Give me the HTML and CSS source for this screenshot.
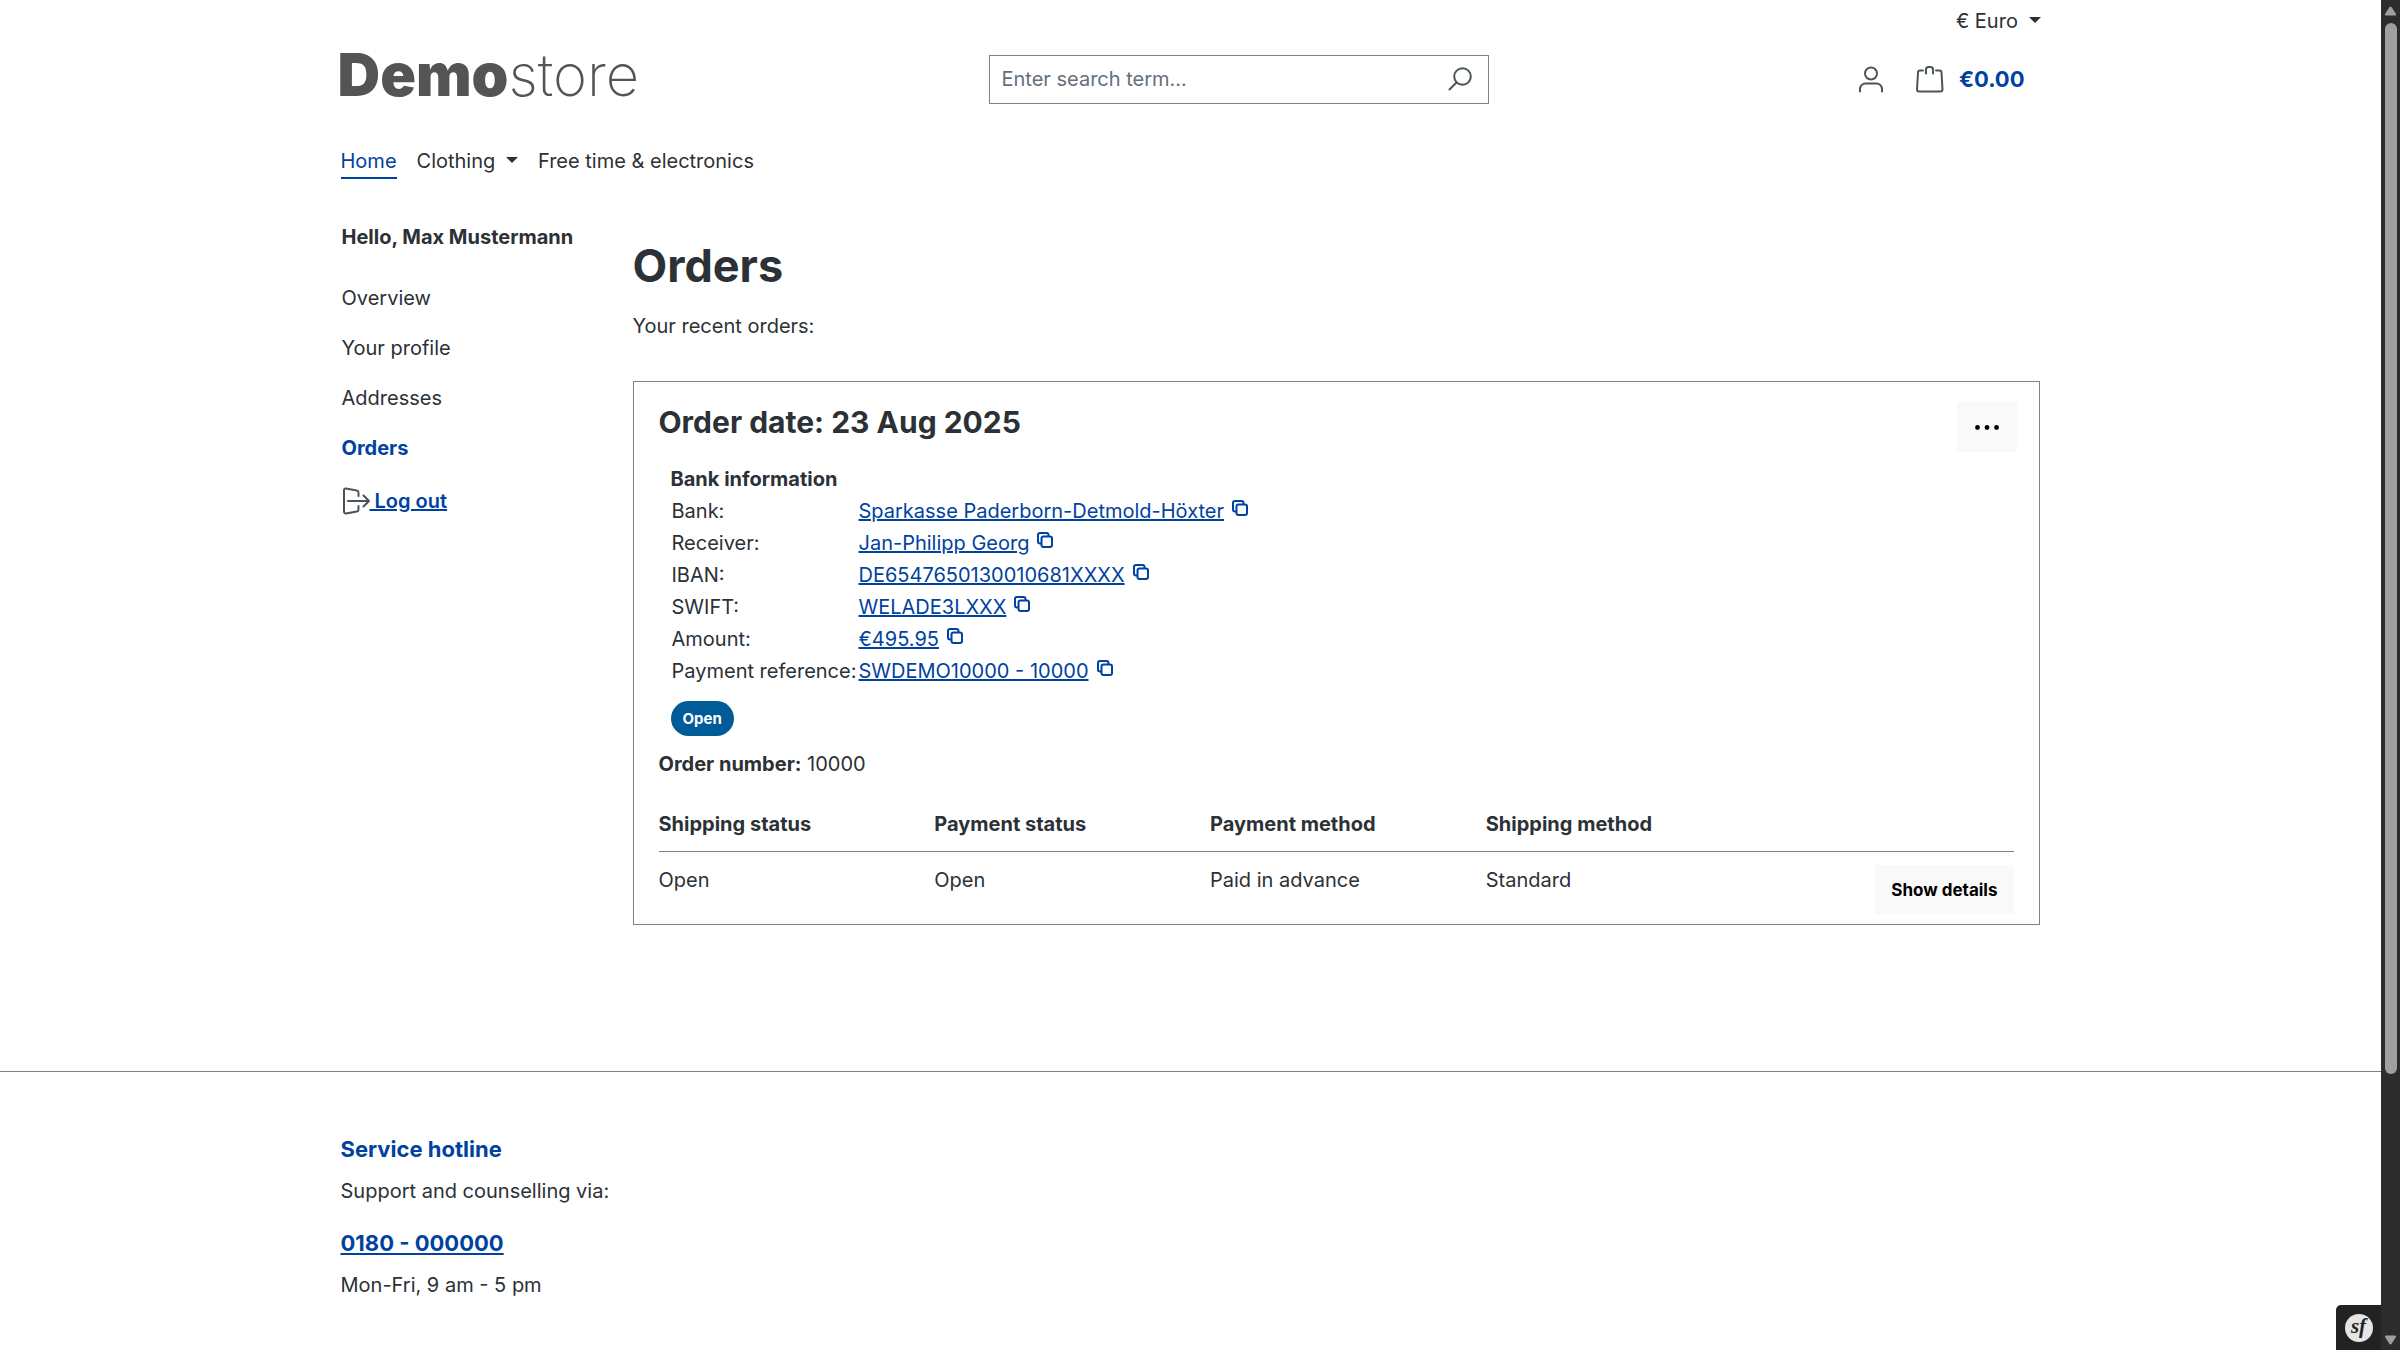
FILE: index.html
```html
<!DOCTYPE html>
<html lang="en">
<head>
<meta charset="utf-8">
<title>Orders | Demostore</title>
<link rel="stylesheet" href="styles.css">
</head>
<body>
<svg class="sprite" aria-hidden="true">
  <symbol id="copy" viewBox="0 0 16 16">
    <path d="M4.500 11.500H3A2 2 0 0 1 1 9.500V3A2 2 0 0 1 3 1H9.500A2 2 0 0 1 11.500 3V4.500"/>
    <rect x="4.500" y="4.500" width="10.500" height="10.500" rx="2"/>
  </symbol>
</svg>
<div class="page">
  <header class="container">
    <div class="topbar">
      <button class="currency" type="button">€ Euro <span class="caret"></span></button>
    </div>
    <div class="header-row">
      <a class="logo" href="#"><b>Demo</b>store</a>
      <form class="search" role="search">
        <input type="search" placeholder="Enter search term..." aria-label="Enter search term">
        <button type="button" aria-label="Search">
          <svg class="icon" viewBox="0 0 28 28"><circle cx="16.500" cy="11.500" r="8.300"/><path d="M10.500 17.500L3.500 24.500"/></svg>
        </button>
      </form>
      <div class="actions">
        <button class="account" type="button" aria-label="Your account">
          <svg class="icon" viewBox="0 0 28 28"><circle cx="14" cy="8.500" r="6"/><path d="M3 26.500V24A5.500 5.500 0 0 1 8.500 18.500H19.500A5.500 5.500 0 0 1 25 24V26.500"/></svg>
        </button>
        <a class="cart" href="#">
          <svg class="icon" viewBox="0 0 28 28"><path d="M7 5.500H4A2 2 0 0 0 2 7.500L1 24.500A2 2 0 0 0 3 26.500H24.500A2 2 0 0 0 26.500 24.500L25.500 7.500A2 2 0 0 0 23.500 5.500H20M10 8.500V4.500A2.500 2.500 0 0 1 12.500 2H14.500A2.500 2.500 0 0 1 17 4.500V8.500"/></svg>
          <span>€0.00</span>
        </a>
      </div>
    </div>
    <nav class="main-nav">
      <a class="active" href="#">Home</a>
      <a href="#">Clothing <span class="caret"></span></a>
      <a href="#">Free time &amp; electronics</a>
    </nav>
  </header>

  <div class="container account-layout">
    <aside class="sidebar">
      <strong>Hello, Max Mustermann</strong>
      <nav>
        <a href="#">Overview</a>
        <a href="#">Your profile</a>
        <a href="#">Addresses</a>
        <a class="current" href="#">Orders</a>
      </nav>
      <a class="logout" href="#"><svg class="icon" viewBox="0 0 28 28"><path d="M16.500 9V5.500A2 2 0 0 0 14.800 3.500L3.800 1.600A1.600 1.600 0 0 0 2 3.200V24.800A1.600 1.600 0 0 0 3.800 26.400L14.800 24.500A2 2 0 0 0 16.500 22.500V19M6 14H27M21.500 8.500L27 14L21.500 19.500"/></svg><span>&nbsp;Log out</span></a>
    </aside>

    <main class="content">
      <h1>Orders</h1>
      <p class="lead">Your recent orders:</p>
      <article class="order">
        <div class="order-head">
          <h2>Order date: 23 Aug 2025</h2>
          <button class="btn more" type="button" aria-label="Order actions">
            <svg viewBox="0 0 28 28"><circle cx="4.500" cy="14.500" r="2.400"/><circle cx="14" cy="14.500" r="2.400"/><circle cx="23.500" cy="14.500" r="2.400"/></svg>
          </button>
        </div>
        <section class="bank">
          <h3>Bank information</h3>
          <table class="bank-table">
            <tr><td>Bank:</td><td><a href="#">Sparkasse Paderborn-Detmold-Höxter</a><svg class="copy"><use href="#copy"/></svg></td></tr>
            <tr><td>Receiver:</td><td><a href="#">Jan-Philipp Georg</a><svg class="copy"><use href="#copy"/></svg></td></tr>
            <tr><td>IBAN:</td><td><a href="#">DE6547650130010681XXXX</a><svg class="copy"><use href="#copy"/></svg></td></tr>
            <tr><td>SWIFT:</td><td><a href="#">WELADE3LXXX</a><svg class="copy"><use href="#copy"/></svg></td></tr>
            <tr><td>Amount:</td><td><a href="#">€495.95</a><svg class="copy"><use href="#copy"/></svg></td></tr>
            <tr><td>Payment reference:</td><td><a href="#">SWDEMO10000 - 10000</a><svg class="copy"><use href="#copy"/></svg></td></tr>
          </table>
          <span class="badge">Open</span>
        </section>
        <p class="order-number"><strong>Order number:</strong> 10000</p>
        <table class="status">
          <colgroup><col><col><col><col><col class="action-col"></colgroup>
          <thead>
            <tr><th>Shipping status</th><th>Payment status</th><th>Payment method</th><th>Shipping method</th><th></th></tr>
          </thead>
          <tbody>
            <tr><td>Open</td><td>Open</td><td>Paid in advance</td><td>Standard</td><td class="action"><button class="btn" type="button">Show details</button></td></tr>
          </tbody>
        </table>
      </article>
    </main>
  </div>

  <footer class="footer">
    <div class="container">
      <h2>Service hotline</h2>
      <p>Support and counselling via:</p>
      <a class="phone" href="#">0180 - 000000</a>
      <p>Mon-Fri, 9 am - 5 pm</p>
    </div>
  </footer>
  <button class="profiler" type="button" aria-label="Symfony toolbar"><span>sf</span></button>
</div>
<div class="scrollbar" aria-hidden="true">
  <svg viewBox="0 0 19 20"><path d="M8.200 7.500Q9.500 5.500 10.800 7.500L15 14Q15.500 15.500 14 15.500H5Q3.500 15.500 4 14Z"/></svg>
  <div class="track"><div class="thumb" style="height: 80.6%"></div></div>
  <svg viewBox="0 0 19 20"><path d="M8.200 13.500Q9.500 15.500 10.800 13.500L15 7Q15.500 5.500 14 5.500H5Q3.500 5.500 4 7Z"/></svg>
</div>
</body>
</html>
```
FILE: styles.css
```css
:root {
  --text: #2b3136;
  --brand: #0042a0;
  --border: #798490;
  --icon: #4a545b;
  --soft: #f9f9f9;
}

* { box-sizing: border-box; }

body {
  display: grid;
  grid-template-columns: minmax(0, 1fr) 19px;
  margin: 0;
  min-height: 100vh;
  color: var(--text);
  background: #fff;
  font: 400 20px/30px Inter, "Liberation Sans", sans-serif;
}

h1, h2, h3, p { margin: 0; }
a { color: var(--brand); }
strong { font-weight: 700; }

button {
  padding: 0;
  border: 0;
  background: none;
  color: inherit;
  font: inherit;
  cursor: pointer;
}

.sprite {
  position: absolute;
  width: 0;
  height: 0;
}

.page { position: relative; }

.container {
  width: 100%;
  max-width: 1700px;
  margin: 0 auto;
}

.icon {
  display: block;
  flex: none;
  width: 28px;
  height: 28px;
  fill: none;
  stroke: var(--icon);
  stroke-width: 2;
  stroke-linecap: round;
  stroke-linejoin: round;
}

.caret {
  display: inline-block;
  margin-left: 5px;
  border: 6px solid transparent;
  border-top-color: currentColor;
  border-bottom: 0;
  vertical-align: 5px;
}

/* Header */
.topbar {
  display: flex;
  justify-content: flex-end;
  padding: 6px 0;
}

.header-row {
  display: grid;
  grid-template-columns: 38% 500px 1fr;
  column-gap: 2px;
  align-items: center;
  min-height: 50px;
  margin-top: 12px;
}

.logo {
  align-self: start;
  margin-left: -3px;
  color: #545454;
  font-size: 58px;
  font-weight: 200;
  line-height: 42px;
  text-decoration: none;
}

.logo b {
  font-size: 59px;
  font-weight: 900;
}

.search {
  display: flex;
  align-items: center;
  height: 49px;
  padding: 0 14px 0 12px;
  border: 1px solid var(--border);
}

.search input {
  flex: 1;
  min-width: 0;
  padding: 0;
  border: 0;
  outline: 0;
  background: none;
  color: inherit;
  font: inherit;
}

.search input::placeholder {
  color: #63707c;
  opacity: 1;
}

.actions {
  display: flex;
  justify-content: flex-end;
  align-items: center;
  gap: 31px;
  padding-right: 16px;
}

.cart {
  display: flex;
  align-items: center;
  gap: 15px;
  font-size: 22px;
  font-weight: 700;
  text-decoration: none;
}

.main-nav {
  display: flex;
  gap: 20px;
  margin-top: 42px;
}

.main-nav a {
  padding-bottom: 1px;
  border-bottom: 2px solid transparent;
  color: var(--text);
  text-decoration: none;
}

.main-nav a.active {
  border-color: var(--brand);
  color: var(--brand);
}

/* Account area */
.account-layout {
  display: grid;
  grid-template-columns: 242px minmax(0, 1fr);
  gap: 50px;
  padding: 43px 1px 146px 0;
}

.sidebar {
  padding-left: 1px;
  white-space: nowrap;
}

.sidebar nav {
  display: grid;
  gap: 20px;
  margin-top: 31px;
}

.sidebar nav a {
  color: var(--text);
  text-decoration: none;
}

.sidebar nav .current {
  color: var(--brand);
  font-weight: 700;
}

.logout {
  display: flex;
  align-items: center;
  margin-top: 23px;
  font-weight: 600;
  text-decoration: none;
}

.logout span { text-decoration: underline; }

.content { padding-top: 17px; }

h1 {
  font-size: 45px;
  font-weight: 700;
  line-height: 54px;
}

.lead { margin-top: 18px; }

.order {
  margin-top: 40px;
  padding: 20px 25px 10px;
  border: 1px solid var(--border);
}

.order-head {
  display: flex;
  justify-content: space-between;
  align-items: flex-start;
  margin-right: -3px;
}

.order-head h2 {
  font-size: 30px;
  font-weight: 700;
  line-height: 40px;
}

.btn {
  height: 49px;
  padding: 0 16px;
  background: var(--soft);
  color: #000;
  font-size: 17px;
  font-weight: 700;
}

.more {
  display: grid;
  place-items: center;
  width: 60px;
  height: 50px;
}

.more svg {
  width: 28px;
  height: 28px;
}

.bank {
  margin-top: 12px;
  padding-left: 12px;
}

.bank h3 {
  font-size: 20px;
  font-weight: 700;
  line-height: 30px;
}

.bank-table {
  margin-top: 1px;
  border-collapse: collapse;
}

.bank-table td {
  height: 32px;
  padding: 0 1px;
  white-space: nowrap;
}

.copy {
  width: 16px;
  height: 16px;
  margin-left: 8px;
  fill: none;
  stroke: var(--brand);
  stroke-width: 2;
  vertical-align: 2px;
}

.badge {
  display: block;
  width: fit-content;
  margin-top: 14px;
  padding: 0 12px;
  border-radius: 18px;
  background: #005b99;
  color: #fff;
  font-size: 15px;
  font-weight: 700;
  line-height: 35px;
}

.order-number { margin-top: 13px; }

.status {
  width: 100%;
  margin-top: 30px;
  border-collapse: collapse;
  table-layout: fixed;
}

.action-col { width: 252px; }

.status th {
  padding: 0 0 12px;
  border-bottom: 1px solid var(--border);
  font-weight: 700;
  text-align: left;
}

.status td {
  padding: 13px 0 0;
  vertical-align: top;
}

.status .action {
  line-height: 0;
  text-align: right;
}

/* Footer */
.footer {
  padding: 62px 0 50px;
  border-top: 1px solid var(--border);
}

.footer h2 {
  color: var(--brand);
  font-size: 22px;
  font-weight: 700;
  line-height: 30px;
}

.footer p { margin-top: 12px; }

.phone {
  display: block;
  width: fit-content;
  margin-top: 22px;
  font-size: 22px;
  font-weight: 700;
}

.profiler {
  position: fixed;
  right: 19px;
  bottom: 0;
  display: grid;
  place-items: center;
  width: 45px;
  height: 45px;
  border-radius: 5px 0 0 0;
  background: #222;
}

.profiler span {
  width: 28px;
  height: 28px;
  border-radius: 50%;
  background: #e5e5e5;
  color: #222;
  font: italic 700 21px/25px "Liberation Serif", serif;
}

.scrollbar {
  position: sticky;
  top: 0;
  display: flex;
  flex-direction: column;
  height: 100vh;
  background: #2c2c2c;
}

.scrollbar svg {
  width: 19px;
  height: 20px;
  fill: #9f9f9f;
}

.track {
  flex: 1;
  padding: 3px 3px 3px 4px;
}

.thumb {
  border-radius: 6px;
  background: #9f9f9f;
}
```
